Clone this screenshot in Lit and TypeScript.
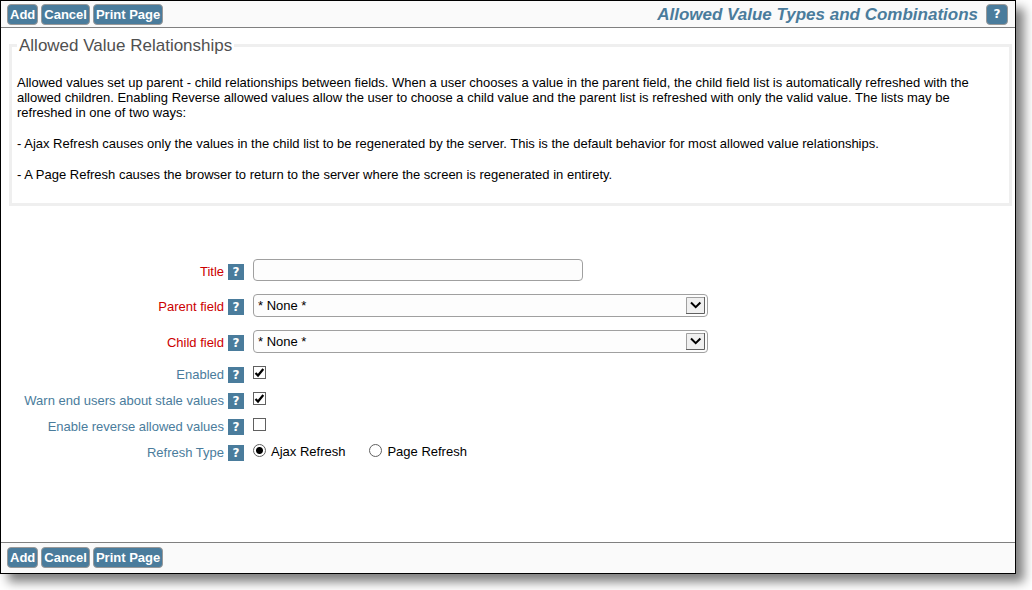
import { LitElement, html, css, nothing } from "lit";
import { customElement, property } from "lit/decorators.js";

@customElement("action-buttons")
class ActionButtons extends LitElement {
  static styles = css`
    :host {
      display: flex;
      gap: 3px;
    }
    .action {
      box-sizing: border-box;
      height: 21px;
      padding: 0 2px;
      border: 1px solid #999;
      border-radius: 4px;
      background: #4a7c9c;
      color: #fff;
      font: bold 13px/19px "Liberation Sans", Arial, sans-serif;
      cursor: pointer;
    }
  `;

  render() {
    return ["Add", "Cancel", "Print Page"].map(
      (name) => html`<button type="button" class="action">${name}</button>`
    );
  }
}

@customElement("help-button")
class HelpButton extends LitElement {
  @property() topic = "";
  @property({ type: Boolean, reflect: true }) large = false;

  static styles = css`
    :host {
      display: block;
      flex: none;
    }
    .help {
      display: block;
      box-sizing: border-box;
      width: 16px;
      height: 16px;
      padding: 0;
      border: 0;
      background: #4a7c9c;
      color: #fff;
      font: bold 12px/16px "DejaVu Sans", Verdana, sans-serif;
      text-align: center;
      cursor: pointer;
    }
    :host([large]) .help {
      width: 22px;
      height: 21px;
      border: 1px solid #999;
      border-radius: 4px;
      line-height: 19px;
    }
  `;

  render() {
    return html`<button type="button" class="help" aria-label="Help: ${this.topic}">?</button>`;
  }
}

@customElement("app-root")
class AppRoot extends LitElement {
  static styles = css`
    :host {
      display: flex;
      box-sizing: border-box;
      min-height: 100vh;
      padding: 0 16px 16px 0;
      background: #fff;
      color: #000;
      font: 13px/15px "Liberation Sans", Arial, sans-serif;
    }
    .window {
      flex: 1;
      min-width: 0;
      display: flex;
      flex-direction: column;
      border: 1px solid #000;
      background: #fff;
      box-shadow: 8px 8px 10px rgba(0, 0, 0, 0.5);
    }
    .bar {
      display: flex;
      align-items: center;
      justify-content: space-between;
      background: #fafafa;
    }
    .top {
      padding: 3px 7px 2px 6px;
      border-bottom: 1px solid #808080;
    }
    .bottom {
      padding: 4px 7px 5px 6px;
      border-top: 1px solid #808080;
    }
    .heading {
      display: flex;
      align-items: center;
      gap: 8px;
    }
    h1 {
      margin: 0;
      color: #4a7c9c;
      font: italic bold 17px/21px "Liberation Sans", Arial, sans-serif;
    }
    .content {
      flex: 1;
      padding: 7px 3px 0 8px;
    }
    fieldset {
      margin: 0;
      padding: 20px 14px 21px 5px;
      border: 3px solid #efefef;
    }
    legend {
      padding: 2px 2px 0;
      color: #505050;
      font-size: 17px;
      line-height: 18px;
    }
    p {
      margin: 0;
    }
    p + p {
      margin-top: 16px;
    }
    form {
      padding-top: 53px;
    }
    .row {
      display: flex;
      align-items: flex-start;
      gap: 9px;
      margin-bottom: 13px;
    }
    .row.tick {
      height: 17px;
      margin-bottom: 9px;
    }
    .caption {
      flex: none;
      box-sizing: border-box;
      width: 235px;
      display: flex;
      justify-content: flex-end;
      gap: 4px;
      padding-top: 5px;
      color: #4a7c9c;
      line-height: 16px;
    }
    .tick .caption {
      padding-top: 1px;
    }
    .required {
      color: #c00;
    }
    .text,
    .select {
      box-sizing: border-box;
      display: block;
      width: 100%;
      margin: 0;
      padding: 0 4px;
      border: 1px solid #a0a0a0;
      border-radius: 4px;
      background: #fdfdfd;
      color: #000;
      font: 13px/20px "Liberation Sans", Arial, sans-serif;
    }
    .text {
      max-width: 330px;
      height: 22px;
    }
    .select {
      appearance: none;
      height: 23px;
    }
    .picker {
      position: relative;
      flex: 0 1 455px;
    }
    .arrow {
      position: absolute;
      top: 3px;
      right: 3px;
      pointer-events: none;
    }
    .box {
      appearance: none;
      box-sizing: border-box;
      flex: none;
      width: 13px;
      height: 13px;
      margin: 0;
      border: 1px solid #606060;
      background: #fff;
    }
    .check {
      position: relative;
      display: flex;
    }
    .mark {
      position: absolute;
      top: 0;
      left: 0;
      pointer-events: none;
      visibility: hidden;
    }
    .box:checked + .mark {
      visibility: visible;
    }
    .round {
      border-radius: 50%;
    }
    .round:checked {
      background: radial-gradient(circle, #000 3px, #fff 4px);
    }
    .choices {
      display: flex;
      gap: 24px;
    }
    .choice {
      display: flex;
      gap: 5px;
    }
  `;

  caption(id: string, text: string, required = false) {
    return html`<div class="caption">
      <label for=${id || nothing} id="${id}-label" class=${required ? "required" : ""}>${text}</label>
      <help-button topic=${text}></help-button>
    </div>`;
  }

  select(id: string, text: string) {
    return html`<div class="row">
      ${this.caption(id, text, true)}
      <div class="picker">
        <select class="select" id=${id}>
          <option>* None *</option>
        </select>
        <svg class="arrow" width="19" height="17" viewBox="0 0 19 17" aria-hidden="true">
          <path d="M0 0H19V17H0Z" fill="#f0f0f0" />
          <path d="M0.5 17V0.5H19" fill="none" stroke="#a0a0a0" />
          <path d="M0 16.5H18.5V0" fill="none" stroke="#606060" />
          <path d="M5 5.5L9.7 10.2L14.4 5.5" fill="none" stroke="#000" stroke-width="2" />
        </svg>
      </div>
    </div>`;
  }

  check(id: string, text: string, on: boolean) {
    return html`<div class="row tick">
      ${this.caption(id, text)}
      <span class="check">
        <input class="box" type="checkbox" id=${id} ?checked=${on} />
        <svg class="mark" width="13" height="13" viewBox="0 0 13 13" aria-hidden="true">
          <path d="M2.5 7L5 9.5L10.3 3" fill="none" stroke="#000" stroke-width="2.2" />
        </svg>
      </span>
    </div>`;
  }

  render() {
    return html`
      <main class="window">
        <header class="bar top">
          <action-buttons></action-buttons>
          <div class="heading">
            <h1>Allowed Value Types and Combinations</h1>
            <help-button large topic="Allowed Value Types and Combinations"></help-button>
          </div>
        </header>
        <div class="content">
          <fieldset>
            <legend>Allowed Value Relationships</legend>
            <p>
              Allowed values set up parent - child relationships between fields. When a user chooses
              a value in the parent field, the child field list is automatically refreshed with the
              allowed children. Enabling Reverse allowed values allow the user to choose a child
              value and the parent list is refreshed with only the valid value. The lists may be
              refreshed in one of two ways:
            </p>
            <p>
              - Ajax Refresh causes only the values in the child list to be regenerated by the
              server. This is the default behavior for most allowed value relationships.
            </p>
            <p>
              - A Page Refresh causes the browser to return to the server where the screen is
              regenerated in entirety.
            </p>
          </fieldset>
          <form>
            <div class="row">
              ${this.caption("title", "Title", true)}
              <input class="text" type="text" id="title" />
            </div>
            ${this.select("parent", "Parent field")} ${this.select("child", "Child field")}
            ${this.check("enabled", "Enabled", true)}
            ${this.check("warn", "Warn end users about stale values", true)}
            ${this.check("reverse", "Enable reverse allowed values", false)}
            <div class="row tick" role="radiogroup" aria-labelledby="ajax-label">
              ${this.caption("ajax", "Refresh Type")}
              <div class="choices">
                <label class="choice">
                  <input class="box round" type="radio" name="refresh" id="ajax" checked />
                  Ajax Refresh
                </label>
                <label class="choice">
                  <input class="box round" type="radio" name="refresh" />
                  Page Refresh
                </label>
              </div>
            </div>
          </form>
        </div>
        <footer class="bar bottom">
          <action-buttons></action-buttons>
        </footer>
      </main>
    `;
  }
}
